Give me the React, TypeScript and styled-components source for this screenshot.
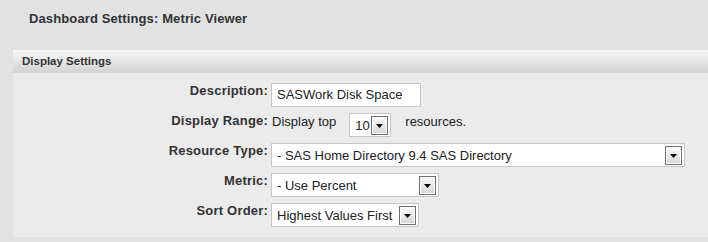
import React from "react";
import styled, { createGlobalStyle } from "styled-components";

const GlobalStyle = createGlobalStyle`
  html, body {
    margin: 0;
    padding: 0;
    background: #e2e2e2;
    font-family: "Liberation Sans", Arial, sans-serif;
  }
  * { box-sizing: border-box; }
`;

const Page = styled.div`
  width: 708px;
  height: 242px;
  background: #e2e2e2;
  overflow: hidden;
`;

const Title = styled.h1`
  margin: 0;
  height: 50px;
  padding: 11px 0 0 29px;
  font-size: 13px;
  line-height: 16px;
  font-weight: bold;
  letter-spacing: 0.12px;
  color: #333333;
`;

const Panel = styled.section`
  margin-left: 13px;
  background: #ebebeb;
`;

const PanelHeader = styled.div`
  height: 23px;
  line-height: 23px;
  padding-left: 9px;
  font-size: 11.5px;
  font-weight: bold;
  color: #333333;
  background: linear-gradient(#f8f8f8, #d2d2d2);
`;

const Form = styled.div`
  display: grid;
  grid-template-columns: 255px 1fr;
  column-gap: 3px;
  row-gap: 6px;
  padding: 10px 0 10px;
`;

const Label = styled.div`
  align-self: start;
  text-align: right;
  font-size: 13px;
  font-weight: bold;
  line-height: 15px;
  letter-spacing: 0.2px;
  color: #333333;
  white-space: nowrap;
`;

const Control = styled.div`
  display: flex;
  align-items: flex-start;
  height: 24px;
`;

const TextInput = styled.div<{ $w: number }>`
  width: ${(p) => p.$w}px;
  height: 24px;
  border: 1px solid #c6c6c6;
  background: #ffffff;
  padding-left: 5px;
  font-size: 13px;
  line-height: 22px;
  color: #222222;
  white-space: nowrap;
`;

const SelectBox = styled.div<{ $w: number; $ml?: number }>`
  width: ${(p) => p.$w}px;
  height: 24px;
  margin-left: ${(p) => p.$ml ?? 0}px;
  border: 1px solid #c6c6c6;
  background: #ffffff;
  display: flex;
  align-items: center;
  justify-content: space-between;
  padding: 0 2px 0 5px;
  font-size: 13px;
  color: #222222;
  white-space: nowrap;
`;

const ArrowButton = styled.div`
  width: 17px;
  height: 19px;
  border: 1px solid #6e6e6e;
  background: linear-gradient(#fbfbfb, #d6d6d6);
  box-shadow: inset 0 0 0 1px #ffffff;
  display: flex;
  align-items: center;
  justify-content: center;
  padding-top: 1px;
`;

const InlineText = styled.span<{ $ml?: number }>`
  margin-left: ${(p) => p.$ml ?? 0}px;
  font-size: 13px;
  line-height: 16px;
  padding-top: 1px;
  color: #222222;
  white-space: nowrap;
`;

const Arrow = () => (
  <svg width="7" height="4" viewBox="0 0 7 4">
    <path d="M0 0H7L3.5 4Z" fill="#000" />
  </svg>
);

const Select = ({ w, ml, value }: { w: number; ml?: number; value: string }) => (
  <SelectBox $w={w} $ml={ml}>
    <span>{value}</span>
    <ArrowButton>
      <Arrow />
    </ArrowButton>
  </SelectBox>
);

export default function App() {
  return (
    <Page>
      <GlobalStyle />
      <Title>Dashboard Settings: Metric Viewer</Title>
      <Panel>
        <PanelHeader>Display Settings</PanelHeader>
        <Form>
          <Label>Description:</Label>
          <Control>
            <TextInput $w={150}>SASWork Disk Space</TextInput>
          </Control>

          <Label>Display Range:</Label>
          <Control>
            <InlineText $ml={1}>Display top</InlineText>
            <Select w={42} ml={13} value="10" />
            <InlineText $ml={14}>resources.</InlineText>
          </Control>

          <Label>Resource Type:</Label>
          <Control>
            <Select w={414} value="- SAS Home Directory 9.4 SAS Directory" />
          </Control>

          <Label>Metric:</Label>
          <Control>
            <Select w={168} value="- Use Percent" />
          </Control>

          <Label>Sort Order:</Label>
          <Control>
            <Select w={148} value="Highest Values First" />
          </Control>
        </Form>
      </Panel>
    </Page>
  );
}
